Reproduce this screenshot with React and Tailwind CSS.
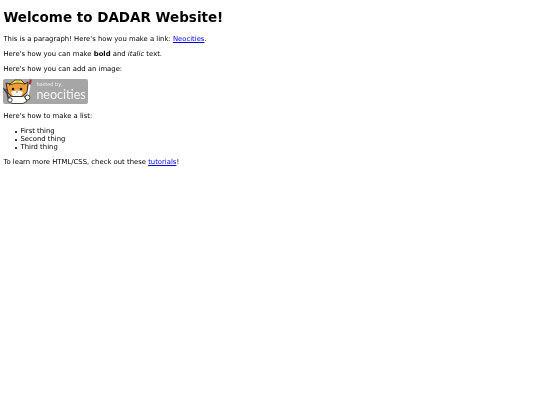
const font = { fontFamily: '"DejaVu Sans", sans-serif' }

function Badge() {
  return (
    <div className="flex h-[25px] w-[85px] items-center rounded-[2px] bg-[#a6a6a6]">
      <svg viewBox="0 0 31 25" className="h-[25px] w-[31px] shrink-0">
        {/* body */}
        <path d="M7 17 L21 17 L24 22 L20 24.5 L9 24.5 L6 22 Z" fill="#ffffff" stroke="#2b2118" strokeWidth="0.8" />
        {/* head */}
        <path d="M4 9 L3 4 L8 5 L12 2 L18 2 L22 5 L25 3 L24.5 9 L24 13 L19 17.5 L9 17.5 L5 14 Z" fill="#ee9f3c" stroke="#2b2118" strokeWidth="0.9" />
        {/* helmet */}
        <path d="M6 6 L12 1 L18 1 L22 5 L14 4 Z" fill="#f4d44c" stroke="#2b2118" strokeWidth="0.7" />
        {/* muzzle */}
        <path d="M8 13 Q14 10 20 13 L18 17 L10 17 Z" fill="#ffffff" />
        <circle cx="10" cy="10" r="1.3" fill="#1f1a17" />
        <circle cx="18" cy="10" r="1.3" fill="#1f1a17" />
        <path d="M13 12.5 L15 12.5 L14 14 Z" fill="#7a3322" />
        {/* wrench */}
        <path d="M1.5 10 L4 14 L6 22" stroke="#3a3a3a" strokeWidth="1.5" fill="none" />
        <path d="M0.5 9 L2 12 L4 10" stroke="#3a3a3a" strokeWidth="1" fill="none" />
        {/* paw */}
        <circle cx="7" cy="21" r="2.2" fill="#ffffff" stroke="#2b2118" strokeWidth="0.8" />
        {/* brush */}
        <path d="M27 5 L24.5 18" stroke="#f5f5f5" strokeWidth="1.6" />
        <path d="M27.7 0.5 L26.8 5.5" stroke="#a8322d" strokeWidth="2.2" />
        <circle cx="24.5" cy="18.5" r="2.4" fill="#ffffff" stroke="#2b2118" strokeWidth="0.8" />
      </svg>
      <div className="ml-[2px] flex flex-col gap-[1.5px] text-[#f4f4f4]">
        <span className="text-[5px] leading-[6px]" style={font}>hosted by,</span>
        <span className="text-[12.5px] leading-[12px] font-['Lato',sans-serif]">neocities</span>
      </div>
    </div>
  )
}

function Item({ children }) {
  return (
    <li className="flex items-center gap-[3.5px]">
      <span className="size-[2px] rounded-full bg-black" />
      {children}
    </li>
  )
}

export default function App() {
  return (
    <div className="min-h-[405px] bg-white px-[3.4px] text-[6.85px] text-black blur-[0.3px]" style={font}>
      <h1 className="pt-[9.5px] text-[13.5px] font-bold leading-[15.7px]">Welcome to DADAR Website!</h1>
      <p className="mt-[11px] leading-[7.85px]">
        This is a paragraph! Here's how you make a link: <a className="text-[#0000ee] underline">Neocities</a>.
      </p>
      <p className="mt-[7px] leading-[7.85px]">
        Here's how you can make <strong className="font-bold">bold</strong> and <em className="italic">italic</em> text.
      </p>
      <p className="mt-[7px] leading-[7.85px]">Here's how you can add an image:</p>
      <div className="mt-[5px]"><Badge /></div>
      <p className="mt-[9.5px] leading-[7.85px]">Here's how to make a list:</p>
      <ul className="mt-[7px] pl-[11.6px] leading-[7.85px]">
        <Item>First thing</Item>
        <Item>Second thing</Item>
        <Item>Third thing</Item>
      </ul>
      <p className="mt-[7px] leading-[7.85px]">
        To learn more HTML/CSS, check out these <a className="text-[#0000ee] underline">tutorials</a>!
      </p>
    </div>
  )
}
